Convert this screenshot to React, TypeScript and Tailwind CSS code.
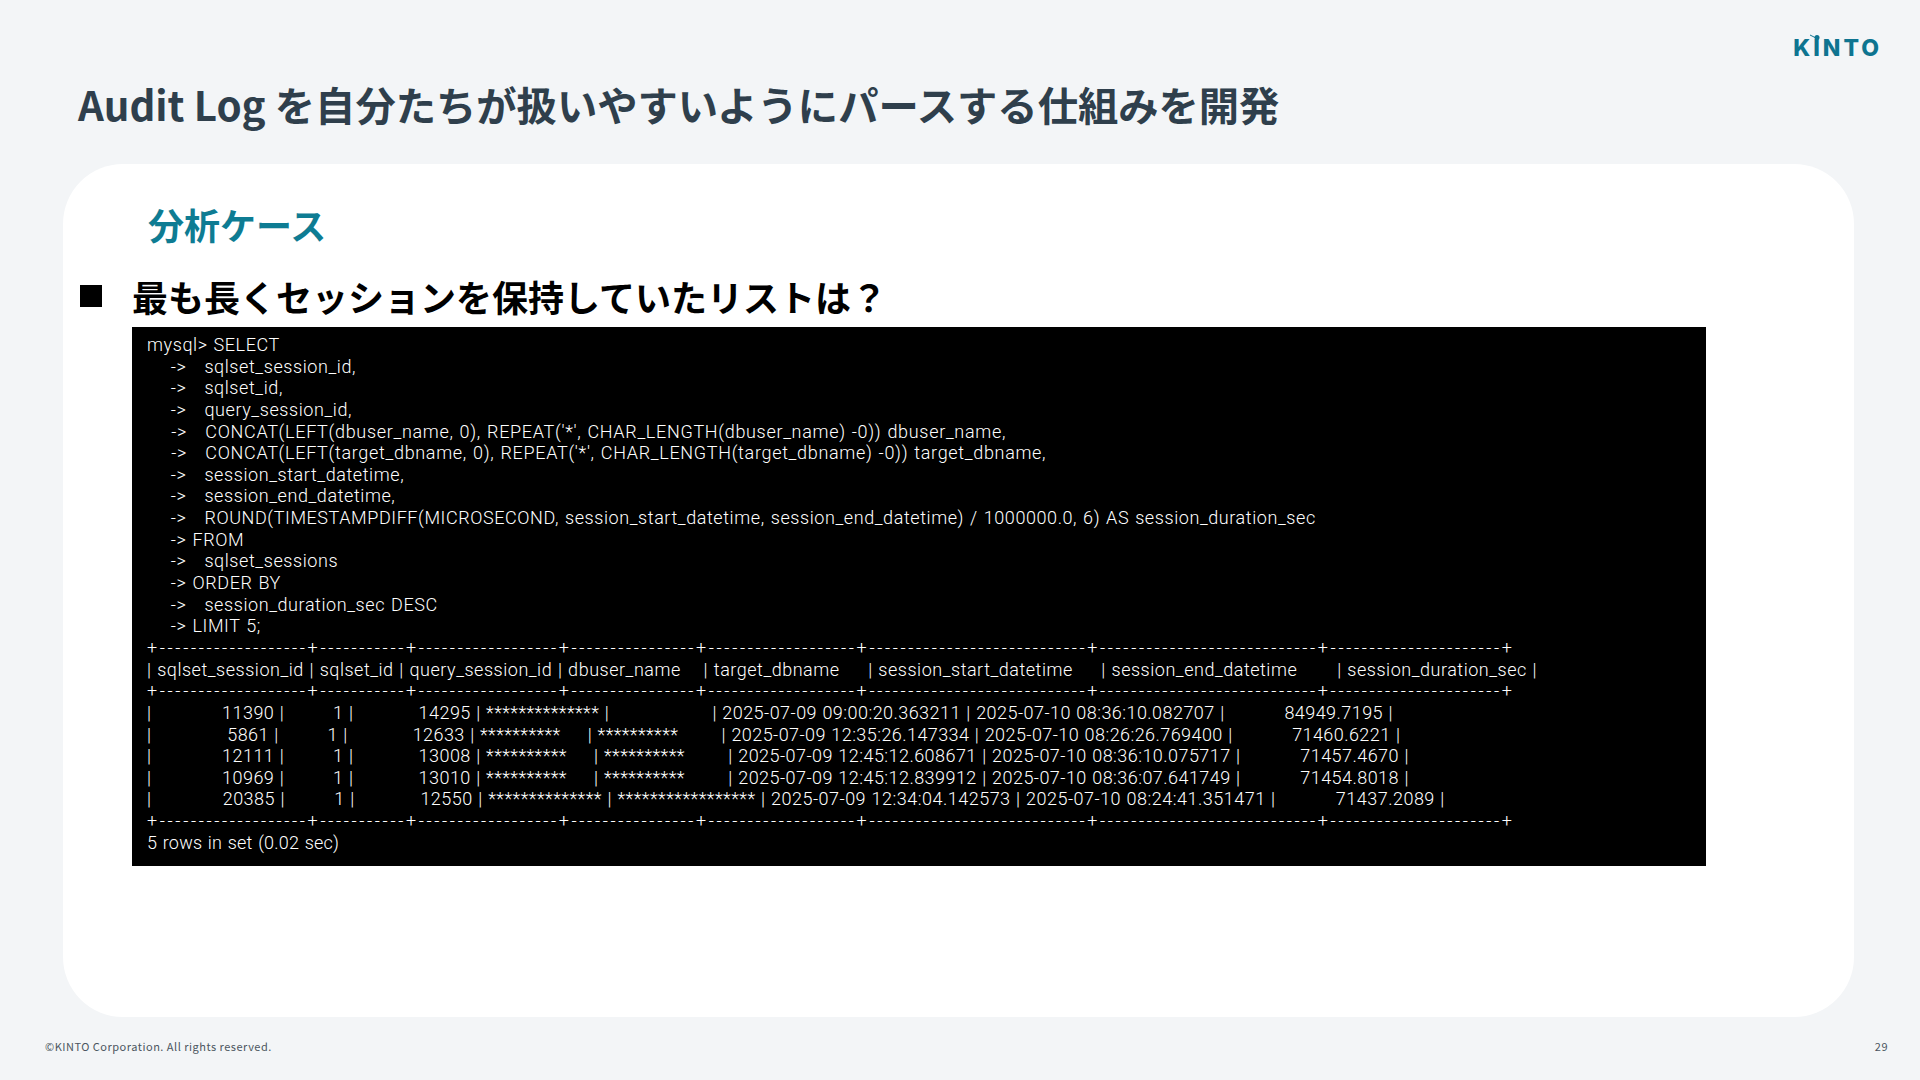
const code = "block h-[21.65px] tracking-[0.58px] [word-spacing:1px]";
const concat = "block h-[21.65px] tracking-[0.68px] [word-spacing:1px]";
const tail = "block h-[21.65px] tracking-[0.2px] [word-spacing:1px]";
const rule = "block h-[21.65px] tracking-[2.62px]";
const head = "block h-[21.65px] tracking-[0.52px] [word-spacing:0.8px]";
const row = "block h-[21.65px] tracking-[0.45px] [word-spacing:0.6px]";
const rowNarrow = "block h-[21.65px] tracking-[0.43px] [word-spacing:0.6px]";
const rowWide = "block h-[21.65px] tracking-[0.49px] [word-spacing:0.6px]";

const ruleText =
  "+-------------------+-----------+------------------+----------------+-------------------+----------------------------+----------------------------+----------------------+";

const sqlLines: [string, string][] = [
  ["mysql> SELECT", code],
  ["    ->   sqlset_session_id,", code],
  ["    ->   sqlset_id,", code],
  ["    ->   query_session_id,", code],
  ["    ->   CONCAT(LEFT(dbuser_name, 0), REPEAT('*', CHAR_LENGTH(dbuser_name) -0)) dbuser_name,", concat],
  ["    ->   CONCAT(LEFT(target_dbname, 0), REPEAT('*', CHAR_LENGTH(target_dbname) -0)) target_dbname,", concat],
  ["    ->   session_start_datetime,", code],
  ["    ->   session_end_datetime,", code],
  ["    ->   ROUND(TIMESTAMPDIFF(MICROSECOND, session_start_datetime, session_end_datetime) / 1000000.0, 6) AS session_duration_sec", code],
  ["    -> FROM", code],
  ["    ->   sqlset_sessions", code],
  ["    -> ORDER BY", code],
  ["    ->   session_duration_sec DESC", code],
  ["    -> LIMIT 5;", code],
  [ruleText, rule],
  ["| sqlset_session_id | sqlset_id | query_session_id | dbuser_name    | target_dbname     | session_start_datetime     | session_end_datetime       | session_duration_sec |", head],
  [ruleText, rule],
  ["|             11390 |         1 |            14295 | ************** |                   | 2025-07-09 09:00:20.363211 | 2025-07-10 08:36:10.082707 |           84949.7195 |", row],
  ["|              5861 |         1 |            12633 | **********     | **********        | 2025-07-09 12:35:26.147334 | 2025-07-10 08:26:26.769400 |           71460.6221 |", rowNarrow],
  ["|             12111 |         1 |            13008 | **********     | **********        | 2025-07-09 12:45:12.608671 | 2025-07-10 08:36:10.075717 |           71457.4670 |", row],
  ["|             10969 |         1 |            13010 | **********     | **********        | 2025-07-09 12:45:12.839912 | 2025-07-10 08:36:07.641749 |           71454.8018 |", row],
  ["|             20385 |         1 |            12550 | ************** | ***************** | 2025-07-09 12:34:04.142573 | 2025-07-10 08:24:41.351471 |           71437.2089 |", rowWide],
  [ruleText, rule],
  ["5 rows in set (0.02 sec)", tail],
];

const jp = "font-['Noto_Sans_CJK_JP','Noto_Sans',sans-serif]";

const KintoLogo = () => (
  <div className="relative mr-[38px] mt-[35px] flex h-[24px] items-end justify-end">
    <span className="font-['Inter',sans-serif] text-[23px] font-extrabold leading-[21px] tracking-[3px] text-[#0e7490]">
      KINTO
    </span>
    <svg className="absolute right-[59px] top-[-1px]" width="14" height="8" viewBox="0 0 14 8">
      <circle cx="8" cy="3.5" r="2.5" fill="#0e7490" />
      <path d="M1 1 L6 3.5" stroke="#0e7490" strokeWidth="1" />
    </svg>
  </div>
);

export default function App() {
  return (
    <div className={`flex h-[1080px] w-[1920px] flex-col overflow-hidden bg-[#f3f5f7] ${jp}`}>
      <KintoLogo />
      <h1 className="ml-[78px] mt-[18px] h-[54px] text-[40.3px] font-bold leading-[54px] text-[#2f3f4c]">
        Audit Log を自分たちが扱いやすいようにパースする仕組みを開発
      </h1>
      <main className="ml-[63px] mt-[33px] h-[853px] w-[1791px] rounded-[60px] bg-white">
        <h2 className="ml-[85px] mt-[34px] text-[36px] font-bold leading-[52px] text-[#0e7c93]">分析ケース</h2>
        <div className="ml-[17px] mt-[21px] flex items-center text-[36px] font-bold leading-[50px] text-black">
          <span className="h-[22px] w-[22px] bg-black" />
          <span className="ml-[30px]">最も長くセッションを保持していたリストは？</span>
        </div>
        <pre className="ml-[69px] mt-[6px] h-[539px] w-[1574px] whitespace-pre bg-black pl-[15px] pt-[7px] font-['Roboto',sans-serif] text-[18px] font-light leading-[21.65px] text-white">
          {sqlLines.map(([text, cls], i) => (
            <span key={i} className={cls}>
              {text}
            </span>
          ))}
        </pre>
      </main>
      <footer className="flex items-center justify-between pl-[45px] pr-[32px] pt-[21px] text-[11px] tracking-[0.5px] text-[#4b5560]">
        <span>©KINTO Corporation. All rights reserved.</span>
        <span>29</span>
      </footer>
    </div>
  );
}
